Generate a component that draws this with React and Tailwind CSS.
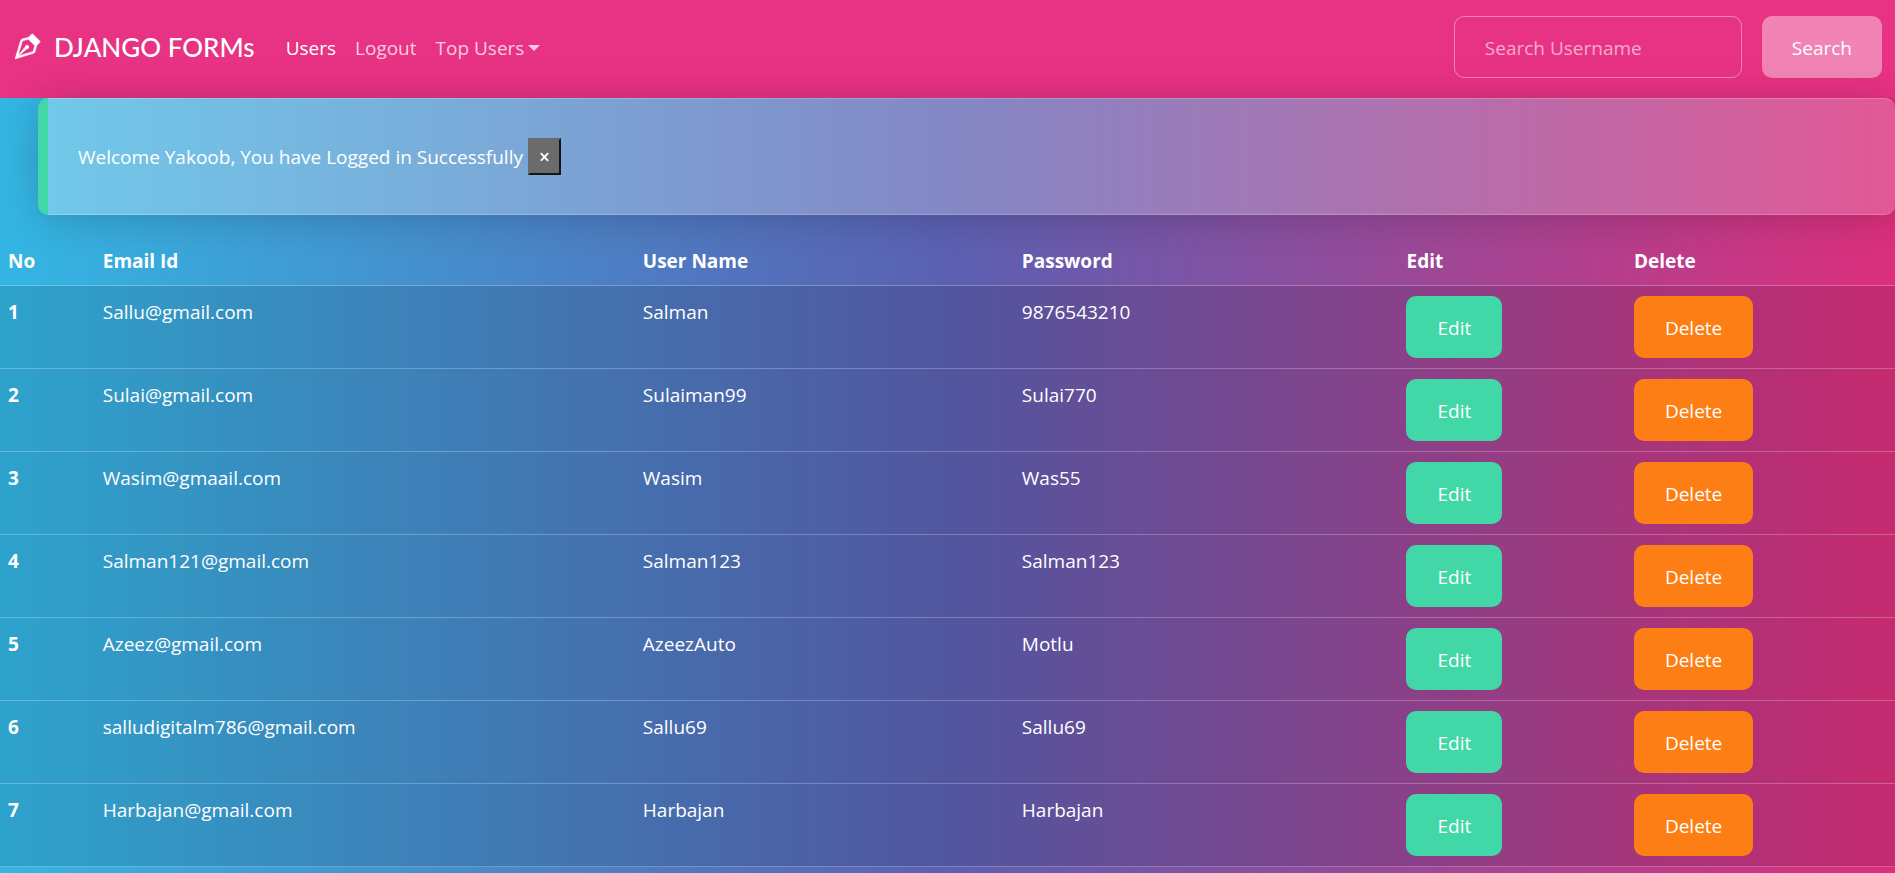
import { BsVectorPen } from "react-icons/bs";

const users = [
  ["Sallu@gmail.com", "Salman", "9876543210"],
  ["Sulai@gmail.com", "Sulaiman99", "Sulai770"],
  ["Wasim@gmaail.com", "Wasim", "Was55"],
  ["Salman121@gmail.com", "Salman123", "Salman123"],
  ["Azeez@gmail.com", "AzeezAuto", "Motlu"],
  ["salludigitalm786@gmail.com", "Sallu69", "Sallu69"],
  ["Harbajan@gmail.com", "Harbajan", "Harbajan"],
];

const columns = [
  ["No", "w-[5%]"],
  ["Email Id", "w-[28.5%]"],
  ["User Name", "w-[20%]"],
  ["Password", "w-[20.3%]"],
  ["Edit", "w-[12%]"],
  ["Delete", "w-[14.2%]"],
];

function NavBar() {
  return (
    <nav className="flex items-center bg-[#e83283] px-[13px] pt-4 pb-5">
      <a href="#" className="mr-[31px] flex items-center gap-[13px] font-['Lato',sans-serif] text-[26px] leading-[38px] font-medium">
        <BsVectorPen className="size-7 stroke-[0.4] stroke-current" aria-hidden="true" />
        DJANGO FORMs
      </a>
      <div className="flex items-center gap-[19px] pt-px">
        <a href="#users">Users</a>
        <a href="#logout" className="text-white/75">Logout</a>
        <button type="button" className="flex items-center gap-1 text-white/75">
          Top Users
          <span className="border-x-[6px] border-t-[6px] border-x-transparent border-t-current" />
        </button>
      </div>
      <form className="ml-auto flex gap-5" onSubmit={(e) => e.preventDefault()}>
        <input
          type="search"
          aria-label="Search Username"
          placeholder="Search Username"
          className="h-[62px] w-72 rounded-[10px] border border-white/40 bg-transparent px-[30px] pt-px placeholder:text-white/60"
        />
        <button type="submit" className="h-[62px] rounded-[10px] bg-white/40 px-[30px] pt-px">Search</button>
      </form>
    </nav>
  );
}

function Welcome() {
  return (
    <div
      role="alert"
      className="relative mb-5 ml-[38px] flex h-[117px] items-center gap-[5px] rounded-[10px] border border-r-0 border-l-[10px] border-white/20 border-l-[#41d7a7] bg-linear-to-r from-white/30 to-white/20 bg-origin-border pl-[30px] shadow-[1px_3px_40px_-1px_rgba(0,0,0,0.2)]"
    >
      <span>Welcome Yakoob, You have Logged in Successfully</span>
      <button type="button" aria-label="Close" className="h-[37px] border-2 border-[#6b6b6b] border-r-[#161616] border-b-[#161616] bg-[#6b6b6b] px-[9px] font-semibold">
        ×
      </button>
    </div>
  );
}

export default function App() {
  return (
    <div className="min-h-screen overflow-x-hidden bg-linear-[90deg,#33b6e3,#5b60b2_50%,#dc2f7c] font-['Open_Sans',sans-serif] text-[19px] leading-[30px] text-white">
      <NavBar />
      <Welcome />
      <table className="w-full table-fixed border-collapse text-left">
        <thead>
          <tr className="border-b border-white/25">
            {columns.map(([name, width]) => (
              <th key={name} scope="col" className={`${width} px-2 pt-[11px] pb-[9px] font-bold`}>{name}</th>
            ))}
          </tr>
        </thead>
        <tbody>
          {users.map(([email, name, password], i) => (
            <tr key={email} className="border-b border-white/25 bg-black/10 align-top">
              <th scope="row" className="px-2 pt-[11px] pb-[9px] font-bold">{i + 1}</th>
              <td className="px-2 pt-[11px] pb-[9px]">{email}</td>
              <td className="px-2 pt-[11px] pb-[9px]">{name}</td>
              <td className="px-2 pt-[11px] pb-[9px]">{password}</td>
              <td className="px-2 py-[10px]">
                <button type="button" className="block h-[62px] rounded-[10px] bg-[#41d7a7] px-[31px] pt-px">Edit</button>
              </td>
              <td className="px-2 py-[10px]">
                <button type="button" className="block h-[62px] rounded-[10px] bg-[#fd7e14] px-[31px] pt-px">Delete</button>
              </td>
            </tr>
          ))}
        </tbody>
      </table>
    </div>
  );
}
